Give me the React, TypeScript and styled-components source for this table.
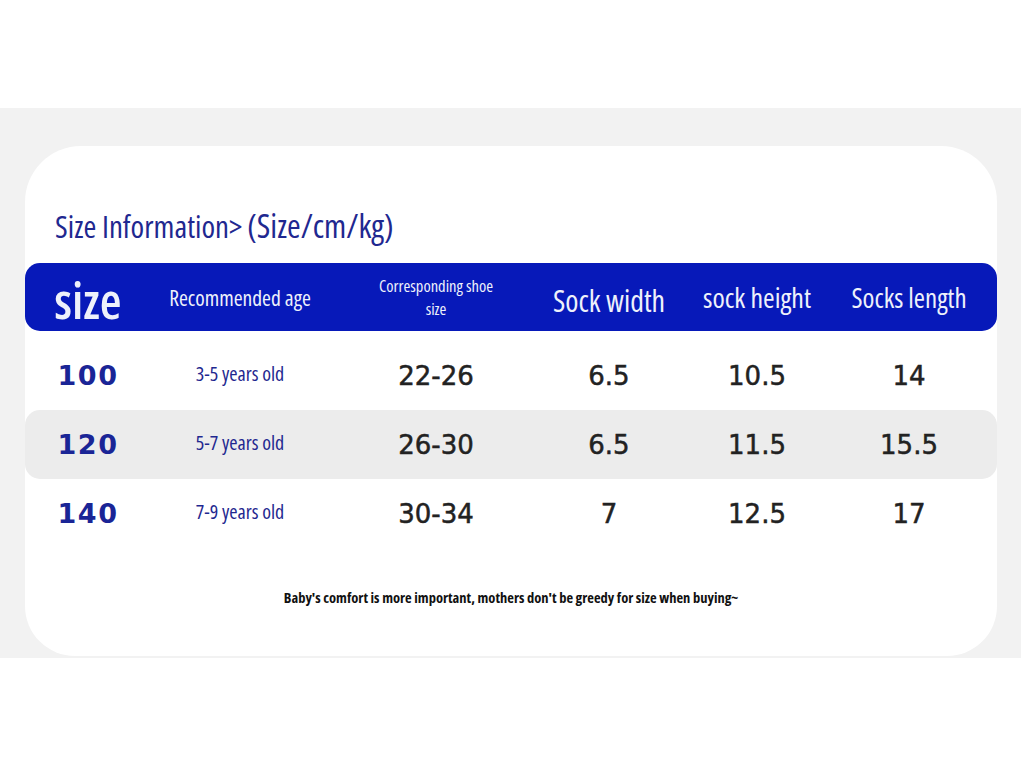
import React from "react";
import styled, { createGlobalStyle } from "styled-components";

const GlobalStyle = createGlobalStyle`
  html, body { margin: 0; padding: 0; background: #ffffff; }
  * { box-sizing: border-box; }
`;

const condensed = `"Open Sans", "DejaVu Sans Condensed", sans-serif`;
const wide = `"DejaVu Sans", "Noto Sans", sans-serif`;

const Page = styled.div`
  padding-top: 108px;
  height: 766px;
`;

const Band = styled.section`
  background: #f2f2f2;
  height: 550px;
  padding: 38px 24px 0 25px;
`;

const Card = styled.div`
  background: #ffffff;
  width: 972px;
  height: 510px;
  border-radius: 56px 56px 50px 50px;
  display: flex;
  flex-direction: column;
`;

const Title = styled.h2`
  margin: 0;
  padding: 62px 0 0 30px;
  height: 117px;
  font-family: ${condensed};
  font-stretch: 75%;
  font-weight: 500;
  color: #1f2890;
  font-size: 31px;
  line-height: 36px;
  white-space: nowrap;
`;

const Unit = styled.span`
  font-size: 33px;
  margin-left: 5px;
`;

const cols = `126px 178px 214px 132px 164px 140px`;

const HeaderBar = styled.div`
  display: grid;
  grid-template-columns: ${cols};
  height: 68px;
  background: #0719b9;
  border-radius: 15px;
  align-items: center;
`;

const HeadCell = styled.div<{ $size: number; $dy?: number; $weight?: number }>`
  text-align: center;
  font-family: ${condensed};
  font-stretch: 75%;
  font-weight: ${(p) => p.$weight ?? 500};
  color: #eef1fb;
  font-size: ${(p) => p.$size}px;
  line-height: ${(p) => Math.ceil(p.$size * 1.37)}px;
  transform: translateY(${(p) => p.$dy ?? 0}px);
  white-space: nowrap;
`;

const HeadStack = styled.div`
  display: flex;
  flex-direction: column;
  align-items: center;
  gap: 0;
  margin-top: -2px;
`;

const Body = styled.div`
  padding-top: 10px;
  display: flex;
  flex-direction: column;
`;

const Row = styled.div<{ $shade?: boolean }>`
  display: grid;
  grid-template-columns: ${cols};
  height: 69px;
  align-items: center;
  border-radius: 15px;
  background: ${(p) => (p.$shade ? "#ececec" : "transparent")};
`;

const SizeCell = styled.div`
  text-align: center;
  font-family: ${wide};
  font-weight: 700;
  font-size: 27px;
  letter-spacing: 1.5px;
  color: #1a2596;
`;

const AgeCell = styled.div`
  text-align: center;
  font-family: ${condensed};
  font-stretch: 75%;
  font-weight: 500;
  font-size: 20px;
  color: #1f2890;
  transform: translateY(-2px);
`;

const NumCell = styled.div`
  text-align: center;
  font-family: ${wide};
  font-size: 26px;
  color: #222222;
  -webkit-text-stroke: 0.5px #222222;
`;

const Footer = styled.p`
  margin: 42px 0 0;
  text-align: center;
  font-family: ${condensed};
  font-stretch: 75%;
  font-weight: 700;
  font-size: 14.5px;
  line-height: 16px;
  color: #111111;
`;

const rows = [
  { size: "100", age: "3-5 years old", shoe: "22-26", w: "6.5", h: "10.5", l: "14" },
  { size: "120", age: "5-7 years old", shoe: "26-30", w: "6.5", h: "11.5", l: "15.5" },
  { size: "140", age: "7-9 years old", shoe: "30-34", w: "7", h: "12.5", l: "17" },
];

export default function App() {
  return (
    <>
      <GlobalStyle />
      <Page>
        <Band>
          <Card>
            <Title>
              Size Information&gt;<Unit>(Size/cm/kg)</Unit>
            </Title>
            <HeaderBar>
              <HeadCell $size={50} $dy={3} $weight={600}>size</HeadCell>
              <HeadCell $size={21.5}>Recommended age</HeadCell>
              <HeadStack>
                <HeadCell $size={16.5}>Corresponding shoe</HeadCell>
                <HeadCell $size={16.5}>size</HeadCell>
              </HeadStack>
              <HeadCell $size={30} $dy={3}>Sock width</HeadCell>
              <HeadCell $size={28}>sock height</HeadCell>
              <HeadCell $size={27}>Socks length</HeadCell>
            </HeaderBar>
            <Body>
              {rows.map((r, i) => (
                <Row key={r.size} $shade={i === 1}>
                  <SizeCell>{r.size}</SizeCell>
                  <AgeCell>{r.age}</AgeCell>
                  <NumCell>{r.shoe}</NumCell>
                  <NumCell>{r.w}</NumCell>
                  <NumCell>{r.h}</NumCell>
                  <NumCell>{r.l}</NumCell>
                </Row>
              ))}
            </Body>
            <Footer>
              Baby's comfort is more important, mothers don't be greedy for size when buying~
            </Footer>
          </Card>
        </Band>
      </Page>
    </>
  );
}
